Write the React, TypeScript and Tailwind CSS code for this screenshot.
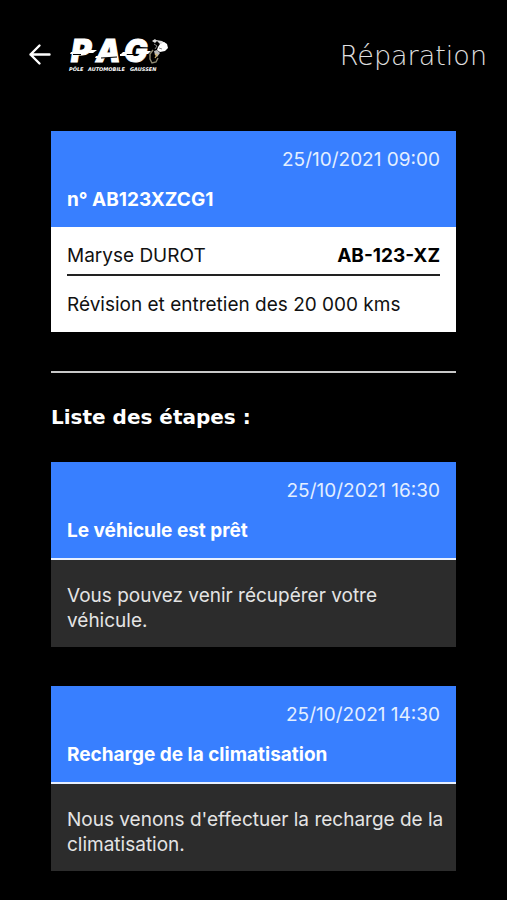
const repair = {
  date: "25/10/2021 09:00",
  number: "n° AB123XZCG1",
  customer: "Maryse DUROT",
  plate: "AB-123-XZ",
  description: "Révision et entretien des 20 000 kms",
};

const steps = [
  {
    date: "25/10/2021 16:30",
    title: "Le véhicule est prêt",
    message: "Vous pouvez venir récupérer votre véhicule.",
  },
  {
    date: "25/10/2021 14:30",
    title: "Recharge de la climatisation",
    message: "Nous venons d'effectuer la recharge de la climatisation.",
  },
];

function BackIcon() {
  return (
    <svg
      width="24"
      height="24"
      viewBox="0 0 24 24"
      fill="none"
      stroke="currentColor"
      strokeWidth="2.4"
      strokeLinecap="round"
      strokeLinejoin="round"
      aria-hidden="true"
    >
      <path d="M21.5 12.5H2.5M11.5 3.5L2.5 12.5l9 9" />
    </svg>
  );
}

function Logo() {
  return (
    <svg width="104" height="48" viewBox="0 -4 104 48" role="img" aria-label="PAG Pôle Automobile Gaussen">
      <g fill="#fff" fontFamily="Inter, sans-serif" fontStyle="italic" fontWeight="900">
        <g fontSize="31" stroke="#fff" strokeWidth="1">
          <text x="3" y="28">P</text>
          <text x="28" y="28">A</text>
          <text x="56" y="28">G</text>
        </g>
        <g fontFamily="'DejaVu Sans', sans-serif" fontWeight="700" fontSize="5">
          <text x="1" y="37">PÔLE</text>
          <text x="20" y="37">AUTOMOBILE</text>
          <text x="62" y="37">GAUSSEN</text>
        </g>
      </g>
      {/* Glitch slices */}
      <path d="M5 20.5h8M33 24l16-1M58 20.5h8" stroke="#000" strokeWidth="1" />
      <path d="M3 18h5l-1 2H2zM23 16h6l-4 3h-5zM28 22h5l-1 2h-5zM52 20h7l-1 2h-6zM55 18h5l-1 2h-6zM78 17h5l-3 3h-5z" fill="#fff" />
      {/* Mascot */}
      <path d="M84 7l3-2 2 2-2 2zM88 6l6 1 3 2-5 1z" fill="#ddd" />
      <path d="M92 10l4-2 3 2 1 4-3 3-5 1-3-2 1-3z" fill="#fff" />
      <path d="M86 10l3 2-2 3M91 14l3 1" fill="none" stroke="#888" strokeWidth="1" />
      <path d="M85 16l-3 4v5l2 4 4-1 2-4" fill="none" stroke="#8d876f" strokeWidth="1.4" />
      <path d="M86 17l3-1 3 3-3 4-2-2z" fill="#bbb" />
      <path d="M87 20l2 1-2 3" fill="none" stroke="#d6b66b" strokeWidth="1.2" />
    </svg>
  );
}

function CardHeader({ date, title }: { date: string; title: string }) {
  return (
    <div className="flex flex-col gap-4 bg-[#387fff] px-4 pt-[17px] pb-[15px]">
      <time className="text-right text-[#e4efff]">{date}</time>
      <h3 className="font-bold text-white">{title}</h3>
    </div>
  );
}

export default function App() {
  return (
    <div className="min-h-screen bg-black pb-7 font-['Inter',sans-serif] text-[19px] leading-6">
      <header className="flex items-center justify-between pt-[30px] pr-5 pl-7">
        <div className="flex items-center gap-4">
          <button type="button" aria-label="Retour" className="text-white">
            <BackIcon />
          </button>
          <Logo />
        </div>
        <h1 className="pt-1 font-['DejaVu_Sans',sans-serif] text-[27px] leading-9 font-extralight text-[#e0e0e0]">
          Réparation
        </h1>
      </header>

      <main className="px-[51px] pt-[53px]">
        {/* Repair summary */}
        <section>
          <CardHeader date={repair.date} title={repair.number} />
          <div className="bg-white px-4 pt-[17px] pb-[15px] text-[#111]">
            <div className="flex justify-between border-b-2 border-[#222] pb-1.5">
              <span>{repair.customer}</span>
              <span className="font-bold text-black">{repair.plate}</span>
            </div>
            <p className="pt-[17px]">{repair.description}</p>
          </div>
        </section>

        <hr className="mt-[39px] border-t-2 border-[#c8c8c8]" />

        <h2 className="mt-8 font-['DejaVu_Sans',sans-serif] text-[20px] leading-6 font-bold text-white">
          Liste des étapes :
        </h2>

        {/* Steps */}
        <div className="mt-[33px] flex flex-col gap-[39px]">
          {steps.map((step) => (
            <article key={step.title}>
              <CardHeader date={step.date} title={step.title} />
              <p className="border-t-2 border-[#e8f0ff] bg-[#2c2c2c] pt-[23px] pr-2 pb-3.5 pl-4 leading-[25px] text-[#e4e4e4]">
                {step.message}
              </p>
            </article>
          ))}
        </div>
      </main>
    </div>
  );
}
